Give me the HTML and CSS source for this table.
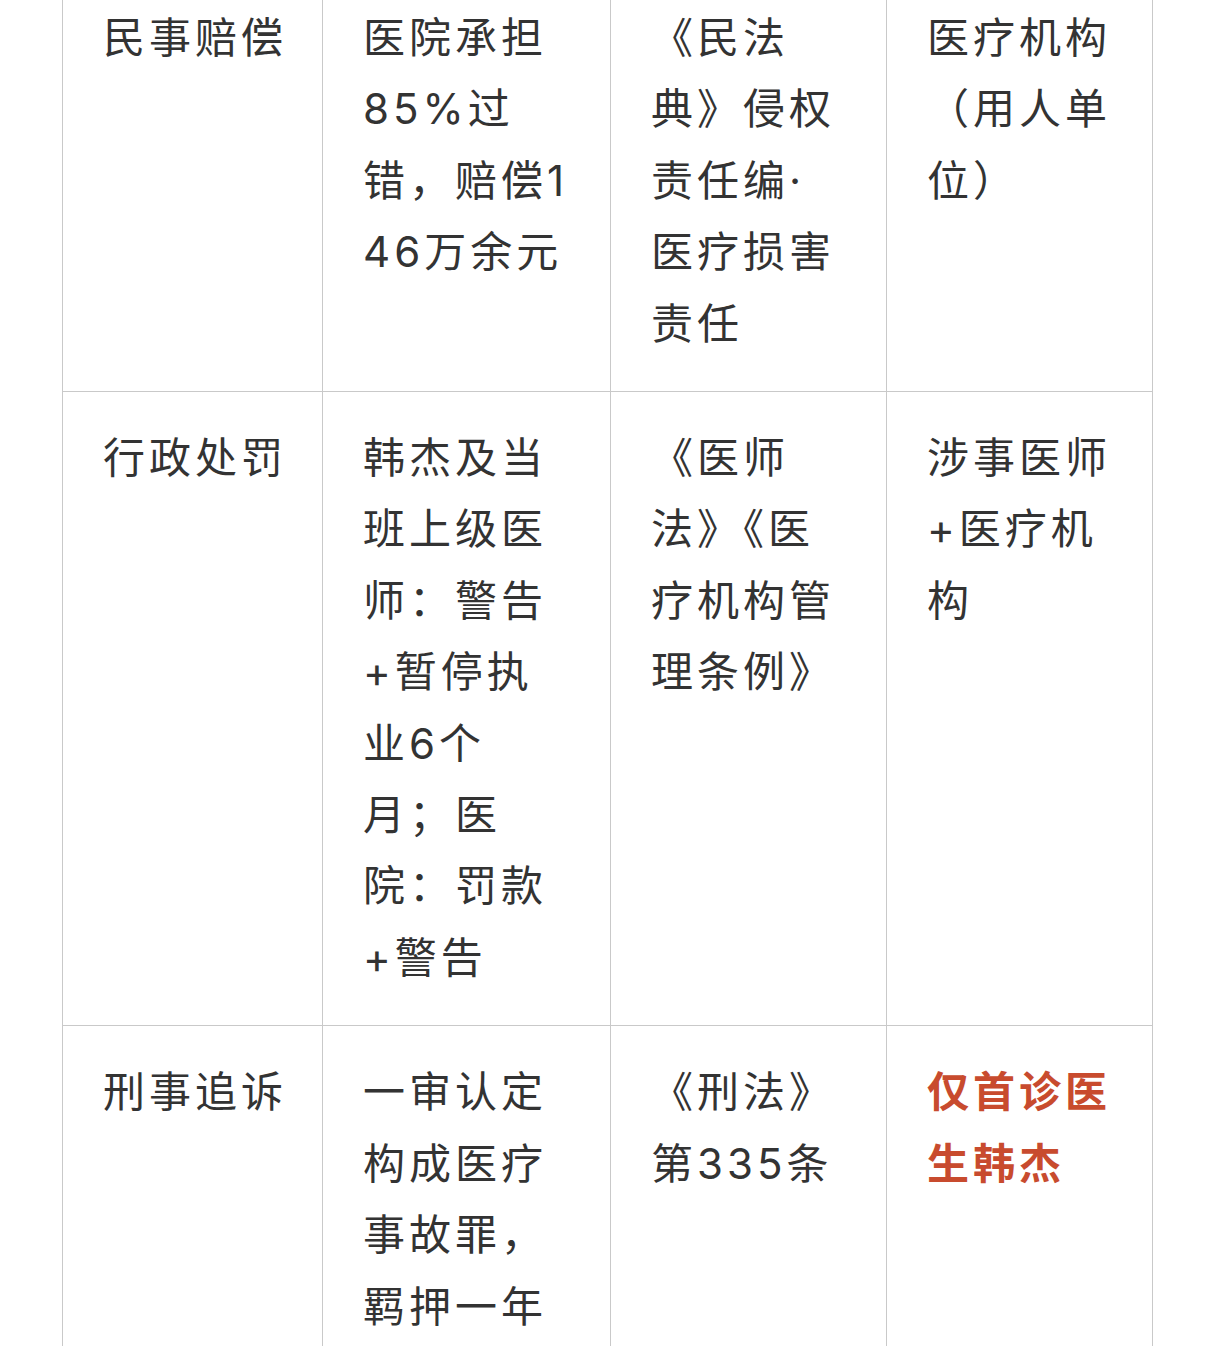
FILE: index.html
```html
<!DOCTYPE html>
<html lang="zh-CN">
<head>
<meta charset="utf-8">
<title>责任对照表</title>
<link rel="stylesheet" href="styles.css">
</head>
<body>
<div class="page">
  <table class="liability">
    <colgroup>
      <col class="c-type">
      <col class="c-result">
      <col class="c-law">
      <col class="c-subject">
    </colgroup>
    <tbody>
      <tr>
        <td class="type">民事赔偿</td>
        <td class="result">医院承担85%过错，赔偿146万余元</td>
        <td class="law">《民法典》侵权责任编·医疗损害责任</td>
        <td class="subject">医疗机构（用人单位）</td>
      </tr>
      <tr>
        <td class="type">行政处罚</td>
        <td class="result">韩杰及当班上级医师：警告+暂停执业6个月；医院：罚款+警告</td>
        <td class="law">《医师法》《医疗机构管理条例》</td>
        <td class="subject">涉事医师+医疗机构</td>
      </tr>
      <tr>
        <td class="type">刑事追诉</td>
        <td class="result">一审认定构成医疗事故罪，羁押一年</td>
        <td class="law">《刑法》第335条</td>
        <td class="subject"><strong class="hl">仅首诊医生韩杰</strong></td>
      </tr>
    </tbody>
  </table>
</div>
</body>
</html>
```

FILE: styles.css
```css
html, body {
  margin: 0;
  padding: 0;
  background: #ffffff;
}

.page {
  padding: 0 0 0 62px;
}

.liability {
  width: 1091px;
  margin-top: -29px;
  border-collapse: collapse;
  table-layout: fixed;
  font-family: "Inter", "Noto Sans CJK SC", sans-serif;
  font-size: 42px;
  line-height: 71.4px;
  letter-spacing: 4px;
  font-variant-numeric: proportional-nums;
  color: #333333;
  word-break: break-all;
}

.c-type { width: 260px; }
.c-result { width: 288px; }
.c-law { width: 276px; }
.c-subject { width: 266px; }

.liability td {
  border: 1px solid #c9c9c9;
  padding: 30px 38px 32px 40px;
  vertical-align: top;
  text-align: left;
}

.liability td.type { padding-right: 30px; }
.liability td.law { padding-right: 43px; }
.liability td.subject { padding-right: 35px; }

.hl {
  color: #c84b2e;
  font-weight: 700;
}
```
